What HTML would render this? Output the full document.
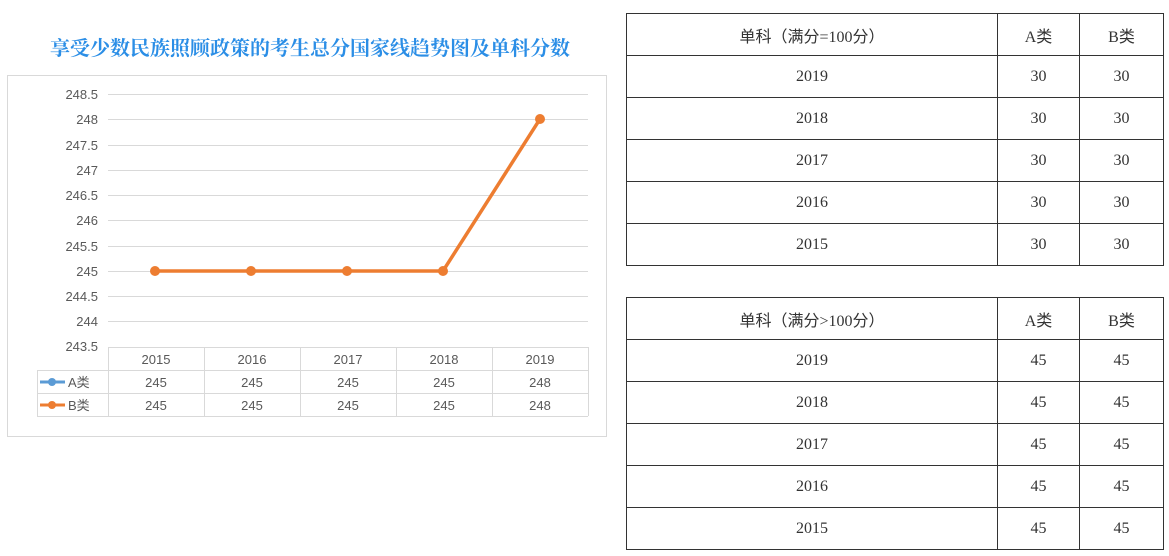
<!DOCTYPE html>
<html><head><meta charset="utf-8"><style>
body{margin:0;width:1169px;height:556px;background:#fff;position:relative;overflow:hidden;font-family:"Liberation Sans","Noto Sans CJK SC",sans-serif}
.title{position:absolute;left:0;width:620px;top:32px;text-align:center;color:#2b8ee6;font-size:20px;font-family:"Noto Serif CJK SC","Noto Sans CJK SC",serif;font-weight:bold;letter-spacing:0px}
table.t{position:absolute;left:626px;border-collapse:collapse;font-family:"Liberation Serif","Noto Sans CJK SC",sans-serif;font-size:16px;color:#333}
table.t td{border:1px solid #333;height:41px;text-align:center;padding:0}
</style></head><body>
<div class="title">享受少数民族照顾政策的考生总分国家线趋势图及单科分数</div>
<svg style="position:absolute;left:0;top:0" width="620" height="556" font-family="Liberation Sans, Noto Sans CJK SC, sans-serif" font-size="13" fill="#595959">
<rect x="7.5" y="75.5" width="599" height="361" fill="#fff" stroke="#d9d9d9"/>
<g stroke="#d9d9d9" stroke-width="1">
<line x1="108" x2="588" y1="94.5" y2="94.5"/><line x1="108" x2="588" y1="119.5" y2="119.5"/>
<line x1="108" x2="588" y1="145.5" y2="145.5"/><line x1="108" x2="588" y1="170.5" y2="170.5"/>
<line x1="108" x2="588" y1="195.5" y2="195.5"/><line x1="108" x2="588" y1="220.5" y2="220.5"/>
<line x1="108" x2="588" y1="246.5" y2="246.5"/><line x1="108" x2="588" y1="271.5" y2="271.5"/>
<line x1="108" x2="588" y1="296.5" y2="296.5"/><line x1="108" x2="588" y1="321.5" y2="321.5"/>
<line x1="108" x2="588" y1="347.5" y2="347.5"/>
<line x1="37" x2="588" y1="370.5" y2="370.5"/><line x1="37" x2="588" y1="393.5" y2="393.5"/><line x1="37" x2="588" y1="416.5" y2="416.5"/>
<line x1="37.5" x2="37.5" y1="370" y2="416"/>
<line x1="108.5" x2="108.5" y1="347" y2="416"/><line x1="204.5" x2="204.5" y1="347" y2="416"/>
<line x1="300.5" x2="300.5" y1="347" y2="416"/><line x1="396.5" x2="396.5" y1="347" y2="416"/>
<line x1="492.5" x2="492.5" y1="347" y2="416"/><line x1="588.5" x2="588.5" y1="347" y2="416"/>
</g>
<g text-anchor="end">
<text x="98" y="99">248.5</text><text x="98" y="124">248</text><text x="98" y="150">247.5</text>
<text x="98" y="175">247</text><text x="98" y="200">246.5</text><text x="98" y="225">246</text>
<text x="98" y="251">245.5</text><text x="98" y="276">245</text><text x="98" y="301">244.5</text>
<text x="98" y="326">244</text><text x="98" y="351">243.5</text>
</g>
<g text-anchor="middle">
<text x="156" y="364">2015</text><text x="252" y="364">2016</text><text x="348" y="364">2017</text><text x="444" y="364">2018</text><text x="540" y="364">2019</text>
<text x="156" y="387">245</text><text x="252" y="387">245</text><text x="348" y="387">245</text><text x="444" y="387">245</text><text x="540" y="387">248</text>
<text x="156" y="410">245</text><text x="252" y="410">245</text><text x="348" y="410">245</text><text x="444" y="410">245</text><text x="540" y="410">248</text>
</g>
<line x1="40" x2="65" y1="382" y2="382" stroke="#5b9bd5" stroke-width="3"/><circle cx="52" cy="382" r="4" fill="#5b9bd5"/>
<text x="68" y="387">A类</text>
<line x1="40" x2="65" y1="405" y2="405" stroke="#ed7d31" stroke-width="3"/><circle cx="52" cy="405" r="4" fill="#ed7d31"/>
<text x="68" y="410">B类</text>
<polyline points="155,271 251,271 347,271 443,271 540,119" fill="none" stroke="#ed7d31" stroke-width="3.5"/>
<g fill="#ed7d31"><circle cx="155" cy="271" r="5"/><circle cx="251" cy="271" r="5"/><circle cx="347" cy="271" r="5"/><circle cx="443" cy="271" r="5"/><circle cx="540" cy="119" r="5"/></g>
</svg>
<table class="t" style="top:13px">
<tr><td style="width:370px">单科（满分=100分）</td><td style="width:81px">A类</td><td style="width:83px">B类</td></tr>
<tr><td>2019</td><td>30</td><td>30</td></tr>
<tr><td>2018</td><td>30</td><td>30</td></tr>
<tr><td>2017</td><td>30</td><td>30</td></tr>
<tr><td>2016</td><td>30</td><td>30</td></tr>
<tr><td>2015</td><td>30</td><td>30</td></tr>
</table>
<table class="t" style="top:297px">
<tr><td style="width:370px">单科（满分&gt;100分）</td><td style="width:81px">A类</td><td style="width:83px">B类</td></tr>
<tr><td>2019</td><td>45</td><td>45</td></tr>
<tr><td>2018</td><td>45</td><td>45</td></tr>
<tr><td>2017</td><td>45</td><td>45</td></tr>
<tr><td>2016</td><td>45</td><td>45</td></tr>
<tr><td>2015</td><td>45</td><td>45</td></tr>
</table>
</body></html>
